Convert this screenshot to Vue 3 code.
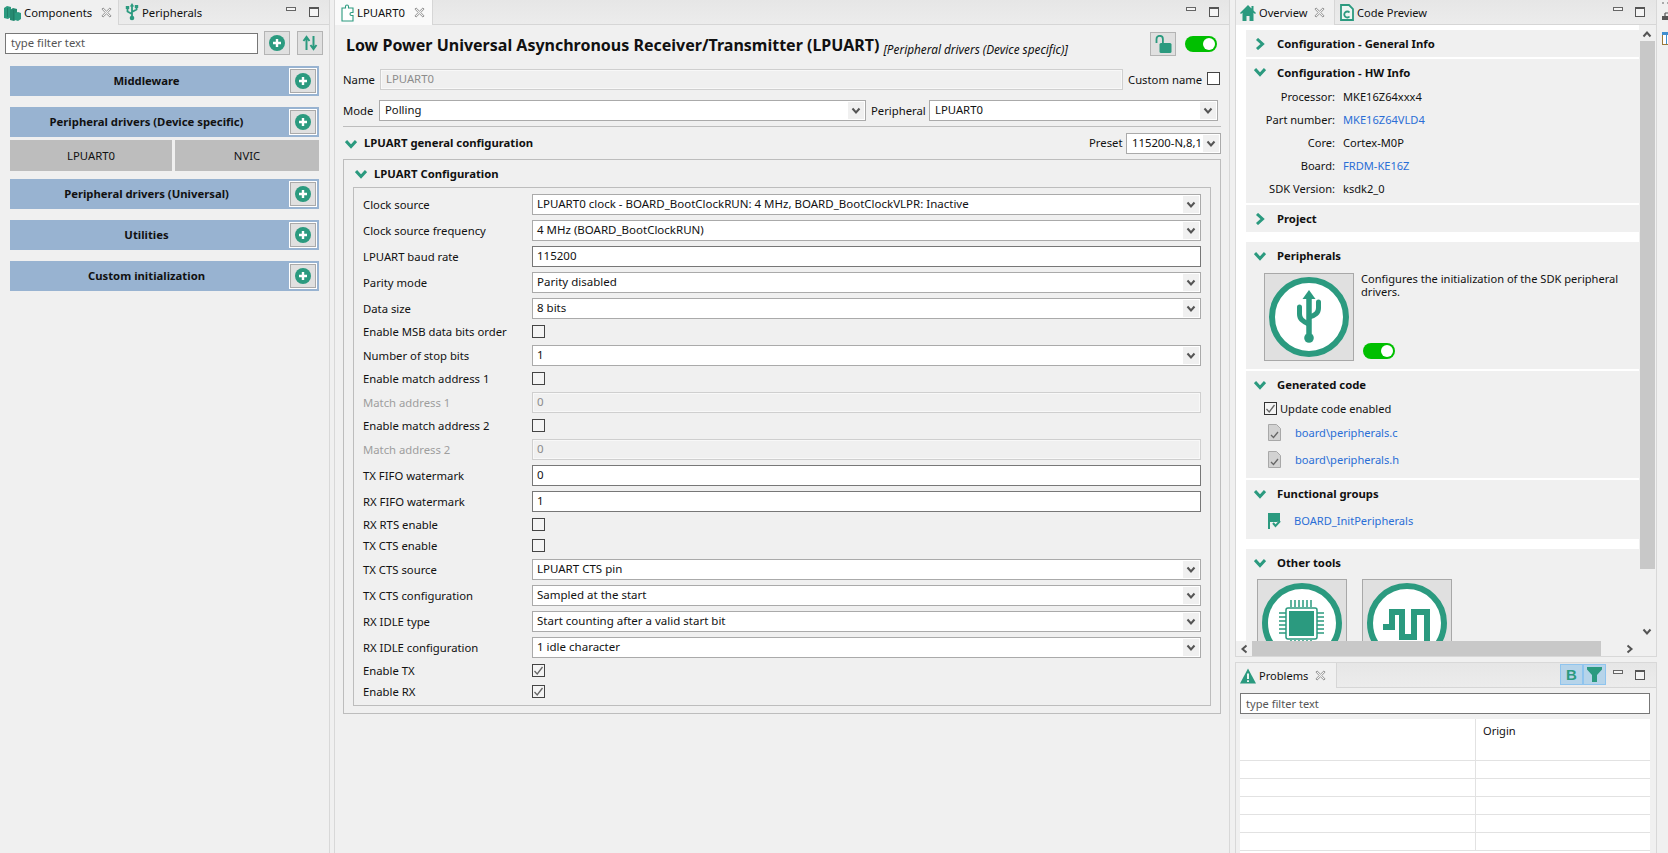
<script setup>
const bars = [
  { name: 'Middleware' },
  { name: 'Peripheral drivers (Device specific)', subs: ['LPUART0', 'NVIC'] },
  { name: 'Peripheral drivers (Universal)' },
  { name: 'Utilities' },
  { name: 'Custom initialization' },
]
const rows = [
  { l: 'Clock source', t: 'select', v: 'LPUART0 clock - BOARD_BootClockRUN: 4 MHz, BOARD_BootClockVLPR: Inactive' },
  { l: 'Clock source frequency', t: 'select', v: '4 MHz (BOARD_BootClockRUN)' },
  { l: 'LPUART baud rate', t: 'text', v: '115200' },
  { l: 'Parity mode', t: 'select', v: 'Parity disabled' },
  { l: 'Data size', t: 'select', v: '8 bits' },
  { l: 'Enable MSB data bits order', t: 'check' },
  { l: 'Number of stop bits', t: 'select', v: '1' },
  { l: 'Enable match address 1', t: 'check' },
  { l: 'Match address 1', t: 'off', v: '0' },
  { l: 'Enable match address 2', t: 'check' },
  { l: 'Match address 2', t: 'off', v: '0' },
  { l: 'TX FIFO watermark', t: 'text', v: '0' },
  { l: 'RX FIFO watermark', t: 'text', v: '1' },
  { l: 'RX RTS enable', t: 'check' },
  { l: 'TX CTS enable', t: 'check' },
  { l: 'TX CTS source', t: 'select', v: 'LPUART CTS pin' },
  { l: 'TX CTS configuration', t: 'select', v: 'Sampled at the start' },
  { l: 'RX IDLE type', t: 'select', v: 'Start counting after a valid start bit' },
  { l: 'RX IDLE configuration', t: 'select', v: '1 idle character' },
  { l: 'Enable TX', t: 'check', on: true },
  { l: 'Enable RX', t: 'check', on: true },
]
const hw = [
  { k: 'Processor:', v: 'MKE16Z64xxx4' },
  { k: 'Part number:', v: 'MKE16Z64VLD4', link: true },
  { k: 'Core:', v: 'Cortex-M0P' },
  { k: 'Board:', v: 'FRDM-KE16Z', link: true },
  { k: 'SDK Version:', v: 'ksdk2_0' },
]
const files = ['board\\peripherals.c', 'board\\peripherals.h']
const tableRows = [1, 2, 3, 4, 5]
</script>

<template>
  <div class="app">
    <svg class="sprite" width="0" height="0">
      <defs>
        <symbol id="close" viewBox="0 0 12 12">
          <path d="M1 2.2 2.2 1 6 4.6 9.8 1 11 2.2 7.4 6 11 9.8 9.8 11 6 7.4 2.2 11 1 9.8 4.6 6Z" fill="#f4f4f4" stroke="#8c8c8c" stroke-width="1" />
        </symbol>
        <symbol id="plus" viewBox="0 0 16 16">
          <circle cx="8" cy="8" r="8" fill="#2b9a7f" />
          <path d="M8 4v8M4 8h8" stroke="#fff" stroke-width="2.4" />
        </symbol>
        <symbol id="down" viewBox="0 0 10 8">
          <path d="M1.5 1.5 5 5.5l3.5-4" fill="none" stroke="#555" stroke-width="2" />
        </symbol>
        <symbol id="open" viewBox="0 0 12 12">
          <path d="M1 3 6 8.5 11 3" fill="none" stroke="#2b9a7f" stroke-width="3" />
        </symbol>
        <symbol id="shut" viewBox="0 0 12 12">
          <path d="M3 1 8.5 6 3 11" fill="none" stroke="#2b9a7f" stroke-width="3" />
        </symbol>
        <symbol id="tick" viewBox="0 0 13 13">
          <path d="M2.5 7 5.2 10 10.5 3" fill="none" stroke="#666" stroke-width="1.3" />
        </symbol>
      </defs>
    </svg>

    <!-- left -->
    <section class="pane left">
      <header class="tabs">
        <div class="tab on">
          <svg class="tabicon" width="17" height="16" viewBox="0 0 17 16">
            <path d="M0 3l3-2 4 1v10l-3 2-4-1z" fill="#2b9a7f" />
            <path d="M6 5l3-2 4 1v10l-3 2-4-1z" fill="#258a71" />
            <path d="M11 8l3-1 3 1v6l-3 2-3-1z" fill="#2b9a7f" />
            <path d="M3.500 3v9M9.500 5v10" stroke="#1f7a63" stroke-width=".8" />
          </svg>
          <span>Components</span>
          <svg class="x" width="11" height="11"><use href="#close" /></svg>
        </div>
        <div class="tab">
          <svg class="tabicon" width="14" height="18" viewBox="0 0 14 18">
            <path d="M7 3v11M2.500 5v3.500L7 11M11.500 4v2.500L7 9" fill="none" stroke="#2b9a7f" stroke-width="1.800" />
            <circle cx="7" cy="15" r="2.300" fill="#2b9a7f" />
            <path d="M7 0 4.800 3.500h4.400z" fill="#2b9a7f" />
            <path d="M.8 3h3.400v3H.8zM9.800 2h3.400v3H9.800z" fill="#2b9a7f" />
          </svg>
          <span>Peripherals</span>
        </div>
        <div class="winbtns"><i class="min"></i><i class="max"></i></div>
      </header>
      <div class="filter-row">
        <div class="filter">type filter text</div>
        <button class="tool">
          <svg width="16" height="16"><use href="#plus" /></svg>
        </button>
        <button class="tool sort">
          <svg width="16" height="16" viewBox="0 0 16 16">
            <path d="M4.500 15V3M1.500 6 4.500 2l3 4M11.500 1v12M8.500 10l3 4 3-4" fill="none" stroke="#2b9a7f" stroke-width="2" />
          </svg>
        </button>
      </div>
      <div class="groups">
        <div v-for="b in bars" :key="b.name" class="group">
          <div class="bar">
            <span class="bar-name">{{ b.name }}</span>
            <button class="bar-add">
              <svg width="16" height="16"><use href="#plus" /></svg>
            </button>
          </div>
          <div v-if="b.subs" class="subs">
            <div class="sub first">{{ b.subs[0] }}</div>
            <div class="sub">{{ b.subs[1] }}</div>
          </div>
        </div>
      </div>
    </section>

    <!-- center -->
    <section class="pane center">
      <header class="tabs">
        <div class="tab on white">
          <svg class="tabicon" width="13" height="18" viewBox="0 0 13 18">
            <path d="M1 4h3.500V2.500a1.500 1.500 0 0 1 3 0V4H12v4.500h-1.500a1.500 1.500 0 0 0 0 3H12V17H1z" fill="#fff" stroke="#2b9a7f" stroke-width="1.100" />
          </svg>
          <span>LPUART0</span>
          <svg class="x" width="11" height="11"><use href="#close" /></svg>
        </div>
        <div class="winbtns"><i class="min"></i><i class="max"></i></div>
      </header>
      <div class="body">
        <div class="title-row">
          <h1>Low Power Universal Asynchronous Receiver/Transmitter (LPUART)</h1>
          <em>[Peripheral drivers (Device specific)]</em>
          <button class="lock">
            <svg width="17" height="19" viewBox="0 0 17 19">
              <path d="M1.500 8V4a3.200 3.200 0 0 1 6.400 0v4" fill="none" stroke="#2b9a7f" stroke-width="1.800" />
              <rect x="4.500" y="8" width="12" height="10" rx="1.500" fill="#2b9a7f" />
            </svg>
          </button>
          <div class="toggle"><i></i></div>
        </div>
        <div class="name-row">
          <label class="lab-name">Name</label>
          <div class="field off name-field">LPUART0</div>
          <label class="lab-custom">Custom name</label>
          <i class="cb"></i>
        </div>
        <div class="mode-row">
          <label class="lab-mode">Mode</label>
          <div class="field select mode-field">Polling<span class="arrow"><svg width="10" height="8"><use href="#down" /></svg></span></div>
          <label class="lab-peri">Peripheral</label>
          <div class="field select peri-field">LPUART0<span class="arrow"><svg width="10" height="8"><use href="#down" /></svg></span></div>
        </div>
        <div class="rule"></div>
        <div class="general-row">
          <svg class="chev" width="12" height="12"><use href="#open" /></svg>
          <strong>LPUART general configuration</strong>
          <label class="lab-preset">Preset</label>
          <div class="field select preset-field">115200-N,8,1<span class="arrow"><svg width="10" height="8"><use href="#down" /></svg></span></div>
        </div>
        <div class="outer">
          <div class="outer-head">
            <svg class="chev" width="12" height="12"><use href="#open" /></svg>
            <strong>LPUART Configuration</strong>
          </div>
          <div class="inner">
            <div v-for="r in rows" :key="r.l" class="row" :class="r.t === 'check' ? 'row-check' : 'row-field'">
              <label :class="{ dis: r.t === 'off' }">{{ r.l }}</label>
              <div v-if="r.t === 'select'" class="field select">{{ r.v }}<span class="arrow"><svg width="10" height="8"><use href="#down" /></svg></span></div>
              <div v-else-if="r.t === 'text'" class="field text">{{ r.v }}</div>
              <div v-else-if="r.t === 'off'" class="field off">{{ r.v }}</div>
              <i v-else class="cb">
                <svg v-if="r.on" width="13" height="13"><use href="#tick" /></svg>
              </i>
            </div>
          </div>
        </div>
      </div>
    </section>

    <!-- right -->
    <div class="rightcol">
      <section class="pane overview">
        <header class="tabs">
          <div class="tab on ov">
            <svg class="tabicon" width="16" height="16" viewBox="0 0 16 16">
              <path d="M8 0 0 8l1 1 1.500-1.300V16h4v-5h3v5h4V7.700L15 9l1-1-2.500-2.500V1h-2v2.500z" fill="#2b9a7f" />
            </svg>
            <span>Overview</span>
            <svg class="x" width="11" height="11"><use href="#close" /></svg>
          </div>
          <div class="tab">
            <svg class="tabicon" width="14" height="17" viewBox="0 0 14 17">
              <path d="M1 1h8l4 4v11H1z" fill="#eef6f3" stroke="#2b9a7f" stroke-width="1.800" />
              <path d="M9.500 8.500a3 3 0 1 0 0 4" fill="none" stroke="#2b9a7f" stroke-width="1.800" />
            </svg>
            <span>Code Preview</span>
          </div>
          <div class="winbtns"><i class="min"></i><i class="max"></i></div>
        </header>
        <div class="ov-main">
          <div class="ov-scroll">
            <div class="sec s-closed">
              <div class="sec-head"><svg width="12" height="12"><use href="#shut" /></svg><strong>Configuration - General Info</strong></div>
            </div>
            <div class="sec s-hw">
              <div class="sec-head"><svg width="12" height="12"><use href="#open" /></svg><strong>Configuration - HW Info</strong></div>
              <div v-for="h in hw" :key="h.k" class="kv">
                <span class="k">{{ h.k }}</span><span :class="{ link: h.link }">{{ h.v }}</span>
              </div>
            </div>
            <div class="sec s-closed">
              <div class="sec-head"><svg width="12" height="12"><use href="#shut" /></svg><strong>Project</strong></div>
            </div>
            <div class="sec s-peri far">
              <div class="sec-head"><svg width="12" height="12"><use href="#open" /></svg><strong>Peripherals</strong></div>
              <div class="peri-body">
                <div class="bigbtn">
                  <svg width="88" height="86" viewBox="0 0 88 86">
                    <circle cx="44" cy="43" r="37" fill="#fff" stroke="#2b9a7f" stroke-width="6" />
                    <path d="M44 22v38" stroke="#2b9a7f" stroke-width="5.500" />
                    <path d="M44 16l-6.500 9h13z" fill="#2b9a7f" />
                    <circle cx="44" cy="64" r="4.800" fill="#2b9a7f" />
                    <path d="M34.500 33v7c0 5 3 7 9 10M53.500 28v6c0 5-3 7-9 9" fill="none" stroke="#2b9a7f" stroke-width="5" stroke-linecap="round" />
                  </svg>
                </div>
                <div class="peri-text">
                  <p>Configures the initialization of the SDK peripheral drivers.</p>
                  <div class="toggle"><i></i></div>
                </div>
              </div>
            </div>
            <div class="sec s-gen">
              <div class="sec-head"><svg width="12" height="12"><use href="#open" /></svg><strong>Generated code</strong></div>
              <div class="upd"><i class="cb dark"><svg width="13" height="13"><use href="#tick" /></svg></i><span>Update code enabled</span></div>
              <div v-for="f in files" :key="f" class="file">
                <svg width="13" height="17" viewBox="0 0 13 17">
                  <path d="M.500.500h8l4 4v12H.500z" fill="#d2d2d2" stroke="#a8a8a8" />
                  <path d="M3 11l2.500 2.500L10 8" fill="none" stroke="#666" stroke-width="1.300" />
                </svg>
                <span class="link">{{ f }}</span>
              </div>
            </div>
            <div class="sec s-func">
              <div class="sec-head"><svg width="12" height="12"><use href="#open" /></svg><strong>Functional groups</strong></div>
              <div class="file fn">
                <svg width="14" height="16" viewBox="0 0 14 16">
                  <path d="M1 0h12v8l-3 1H3v7H1z" fill="#2b9a7f" />
                  <path d="M6 10l2.500 3L13 8" fill="none" stroke="#2b9a7f" stroke-width="2" />
                </svg>
                <span class="link">BOARD_InitPeripherals</span>
              </div>
            </div>
            <div class="sec s-other far">
              <div class="sec-head"><svg width="12" height="12"><use href="#open" /></svg><strong>Other tools</strong></div>
              <div class="tools">
                <div class="bigbtn">
                  <svg width="88" height="86" viewBox="0 0 88 86">
                    <circle cx="44" cy="43" r="37" fill="#fff" stroke="#2b9a7f" stroke-width="6" />
                    <rect x="28" y="28" width="31" height="31" rx="2" fill="none" stroke="#2b9a7f" stroke-width="1.500" />
                    <rect x="31" y="31" width="25" height="25" fill="#2b9a7f" />
                    <path d="M33 20v7M37 20v7M41 20v7M45 20v7M49 20v7M53 20v7M21 33h7M21 37h7M21 41h7M21 45h7M21 49h7M21 53h7M59 33h7M59 37h7M59 41h7M59 45h7M59 49h7M59 53h7M33 60v7M37 60v7M41 60v7M45 60v7M49 60v7M53 60v7" stroke="#2b9a7f" stroke-width="1.500" />
                  </svg>
                </div>
                <div class="bigbtn">
                  <svg width="88" height="86" viewBox="0 0 88 86">
                    <circle cx="44" cy="43" r="37" fill="#fff" stroke="#2b9a7f" stroke-width="6" />
                    <path d="M20 47h9V32h10v25h12V32h13v30" fill="none" stroke="#2b9a7f" stroke-width="6" />
                  </svg>
                </div>
              </div>
            </div>
          </div>
          <div class="vscroll">
            <svg width="10" height="8" class="flip"><use href="#down" /></svg>
            <div class="vthumb"></div>
            <svg width="10" height="8"><use href="#down" /></svg>
          </div>
        </div>
        <div class="hscroll">
          <svg width="10" height="8" class="lft"><use href="#down" /></svg>
          <div class="hthumb"></div>
          <svg width="10" height="8" class="rgt"><use href="#down" /></svg>
        </div>
      </section>

      <section class="pane problems">
        <header class="tabs">
          <div class="tab on pr">
            <svg class="tabicon" width="16" height="16" viewBox="0 0 16 16">
              <path d="M8 .500 0 15.500h16z" fill="#2b9a7f" />
              <path d="M8 5.500v5.500M8 12.300v1.700" stroke="#fff" stroke-width="1.800" />
            </svg>
            <span>Problems</span>
            <svg class="x" width="11" height="11"><use href="#close" /></svg>
          </div>
          <div class="pr-btns">
            <span class="pr-b"><b>B</b></span>
            <span class="pr-b">
              <svg width="15" height="15" viewBox="0 0 15 15"><path d="M0 0h15v2.500L10 8v7H5V8L0 2.500z" fill="#2b9a7f" /></svg>
            </span>
          </div>
          <div class="winbtns"><i class="min"></i><i class="max"></i></div>
        </header>
        <div class="filter wide">type filter text</div>
        <div class="table">
          <div class="tr head"><div class="td c1"></div><div class="td c2">Origin</div></div>
          <div v-for="t in tableRows" :key="t" class="tr"><div class="td c1"></div><div class="td c2"></div></div>
        </div>
      </section>
    </div>

    <!-- right trim -->
    <aside class="strip">
      <div class="dots"></div>
      <svg width="7" height="8" viewBox="0 0 7 8"><path d="M3 1h4M3 1v3M0 4.500h7V8H0z" fill="#555" stroke="#555" stroke-width="1.200" /></svg>
      <svg class="strip-blue" width="7" height="13" viewBox="0 0 7 13"><rect x=".5" y=".5" width="12" height="12" fill="#fff" stroke="#9a7a3a" /><path d="M0 0h7v3H0z" fill="#3f8fd0" /><path d="M4.500 3v9" stroke="#3f8fd0" /></svg>
    </aside>
  </div>
</template>

<style>
html, body { margin: 0; background: #f0f0f0; }
</style>

<style scoped>
.app {
  width: 1668px; height: 853px; overflow: hidden; display: flex; background: #f0f0f0;
  font-family: "Noto Sans", "Open Sans", sans-serif; font-size: 11.3px; color: #111;
}
.app * { box-sizing: border-box; }
.sprite { position: absolute; }
button { padding: 0; margin: 0; font: inherit; }
label { white-space: nowrap; }
i { font-style: normal; display: block; }
.pane { background: #f0f0f0; display: flex; flex-direction: column; overflow: hidden; }
.left { width: 330px; border-right: 1px solid #d8d8d8; flex: none; }
.center { width: 896px; margin-left: 4px; border-left: 1px solid #d8d8d8; border-right: 1px solid #d8d8d8; flex: none; }
.rightcol { width: 422px; margin-left: 5px; display: flex; flex-direction: column; gap: 5px; flex: none; }
.strip { width: 11px; margin-left: 1px; padding: 2px 0 0 4px; display: flex; flex-direction: column; gap: 8px; flex: none; overflow: hidden; background: #f0f0f0; }
.dots { width: 7px; height: 2px; border-top: 2px dotted #aaa; }
.strip-blue { margin-top: 4px; }

.tabs { height: 25px; flex: none; display: flex; align-items: stretch; background: linear-gradient(#e6e6e6, #ececec); border-bottom: 1px solid #d6d6d6; }
.tab { display: flex; align-items: center; height: 24px; padding-left: 5px; white-space: nowrap; }
.tab.on { background: #f0f0f0; border-right: 1px solid #d6d6d6; height: 25px; }
.tab.on.white { background: #fafafa; }
.tabicon { flex: none; margin-right: 3px; }
.x { margin-left: 9px; margin-right: 8px; flex: none; }
.left .tab.on { width: 119px; padding-left: 4px; }
.left .tab:nth-child(2) { padding-left: 6px; }
.center .tab.on { width: 98px; padding-left: 6px; }
.tab.ov { width: 99px; padding-left: 4px; }
.tab.ov .x, .tab.pr .x { margin-left: 7px; }
.overview .tab:nth-child(2) { padding-left: 5px; }
.tab.pr { width: 101px; padding-left: 4px; }
.winbtns { margin-left: auto; display: flex; align-items: flex-start; gap: 13px; padding: 7px 10px 0 0; }
.overview .winbtns { gap: 12px; padding-right: 11px; }
.min { width: 10px; height: 4px; border: 1px solid #666; background: #f4f4f4; }
.max { width: 10px; height: 10px; border: 1px solid #555; border-top-width: 2px; margin-top: 0; background: #f4f4f4; }

.filter-row { display: flex; align-items: center; padding: 6px 0 0 5px; }
.filter { height: 21px; line-height: 17px; width: 253px; padding-left: 5px; border: 1px solid #777; background: #fff; color: #555; }
.tool { width: 26px; height: 24px; margin-left: 6px; border: 1px solid #b4b4b4; background: #e0e0e0; display: flex; align-items: center; justify-content: center; }
.tool.sort { margin-left: 7px; }
.groups { padding: 11px 0 0 10px; width: 319px; display: flex; flex-direction: column; gap: 11px; }
.bar { height: 30px; background: #98b3d1; display: flex; align-items: center; }
.bar-name { flex: 1; text-align: center; font-weight: 700; padding-left: 4px; padding-right: 10px; margin-top: -2px; }
.bar-add { width: 28px; height: 26px; margin-right: 2px; border: 1px solid #fff; outline: 1px solid #aaa; outline-offset: -2px; background: #e0e0e0; display: flex; align-items: center; justify-content: center; }
.subs { display: flex; gap: 3px; margin-top: 3px; margin-bottom: -3px; }
.sub { height: 31px; line-height: 31px; background: #bdbdbd; text-align: center; width: 144px; }
.sub.first { width: 162px; }

.body { padding: 0 8px 0 8px; }
.title-row { height: 24px; margin-top: 7px; display: flex; align-items: center; padding-left: 3px; }
.title-row h1 { margin: 2px 0 0; font-size: 16px; font-weight: 700; white-space: nowrap; }
.title-row em { font-size: 11.8px; margin-left: 4px; margin-top: 10px; white-space: nowrap; }
.lock { width: 26px; height: 24px; margin-left: auto; border: 1px solid #b4b4b4; background: #e0e0e0; display: flex; align-items: center; justify-content: center; }
.toggle { width: 32px; height: 16px; border-radius: 8px; background: #00bf00; margin-left: 9px; margin-right: 4px; padding: 2px; display: flex; justify-content: flex-end; }
.toggle i { width: 12px; height: 12px; border-radius: 50%; background: #fff; }
.name-row { height: 21px; margin-top: 13px; display: flex; align-items: center; }
.lab-name { width: 37px; flex: none; }
.name-field { width: 743px; flex: none; }
.lab-custom { margin-left: 5px; width: 79px; flex: none; }
.name-row .cb { margin-top: -2px; }
.mode-row { height: 21px; margin-top: 10px; display: flex; align-items: center; padding-right: 3px; }
.lab-mode { width: 36px; flex: none; }
.mode-field { width: 487px; flex: none; }
.lab-peri { margin-left: 5px; width: 58px; flex: none; }
.peri-field { flex: 1; }
.rule { height: 1px; margin-top: 5px; background: #bdbdbd; }
.general-row { height: 21px; margin-top: 6px; display: flex; align-items: center; padding-left: 2px; }
.general-row strong { margin: -2px 0 0 7px; }
.lab-preset { margin-left: auto; margin-top: -2px; width: 37px; flex: none; }
.preset-field { width: 95px; flex: none; }
.outer { margin-top: 5px; border: 1px solid #bdbdbd; height: 555px; padding: 0 9px; }
.outer-head { height: 27px; display: flex; align-items: center; padding-left: 2px; }
.outer-head strong { margin-left: 7px; }
.inner { border: 1px solid #bdbdbd; padding: 6px 9px 5px; }
.row { display: grid; grid-template-columns: 169px 1fr; align-items: center; margin-bottom: 5px; }
.row:last-child { margin-bottom: 0; }
.row-field { height: 21px; }
.row-field .field { font-size: 11.5px; padding-left: 4px; }
.row-check { height: 16px; align-items: start; }
.row-check label { line-height: 16px; }
.row-check .cb { justify-self: start; margin-top: 1px; }
.dis { color: #9e9e9e; }

.field { height: 21px; line-height: 18px; padding-left: 5px; white-space: nowrap; position: relative; background: #fff; border: 1px solid #aaa; overflow: hidden; }
.field.text { border-color: #777; }
.field.off { background: #f0f0f0; border: 1px solid #cfcfcf; box-shadow: inset 0 0 0 1px #f8f8f8; color: #8c8c8c; }
.arrow { position: absolute; right: 1px; top: 1px; bottom: 1px; width: 16px; background: #f0f0f0; display: flex; align-items: center; justify-content: center; }
.cb { width: 13px; height: 13px; border: 1px solid #444; background: #f4f4f4; flex: none; display: block; position: relative; }
.cb svg { position: absolute; left: -1px; top: -1px; }
.name-row .cb { background: #fff; }

.overview { height: 657px; border: 1px solid #d8d8d8; border-top: 0; flex: none; font-size: 11.1px; }
.ov-main { height: 616px; flex: none; display: flex; }
.ov-scroll { width: 403px; height: 616px; overflow: hidden; background: #fff; padding: 5px 0 0 10px; flex: none; }
.sec { background: #f0f0f0; margin-bottom: 2px; overflow: hidden; }
.sec.far { margin-top: 10px; }
.sec-head { height: 27px; display: flex; align-items: center; padding-left: 8px; }
.sec-head strong { margin-left: 11px; font-size: 11.3px; }
.s-hw { height: 144px; }
.s-hw .sec-head { height: 26px; }
.kv { height: 23px; display: flex; align-items: center; }
.k { width: 89px; text-align: right; margin-right: 8px; }
.link { color: #2a6ed6; }
.s-peri { height: 127px; }
.peri-body { display: flex; padding: 4px 0 0 18px; }
.bigbtn { width: 90px; height: 88px; border: 1px solid #a8a8a8; background: #e0e0e0; flex: none; }
.peri-text { margin-left: 7px; margin-top: -1px; }
.peri-text p { margin: 0; width: 272px; line-height: 13px; }
.peri-text .toggle { margin: 45px 0 0 2px; }
.s-gen { height: 107px; }
.upd { display: flex; align-items: center; gap: 3px; padding: 0 0 0 18px; height: 20px; }
.cb.dark { border-color: #333; }
.file { display: flex; align-items: center; padding-left: 22px; height: 27px; margin-top: 0; }
.file svg { margin-right: 14px; flex: none; }
.upd + .file { margin-top: 1px; }
.s-func { height: 59px; }
.fn { padding-left: 21px; height: 25px; margin-top: 1px; }
.fn svg { margin-right: 13px; }
.s-other { height: 92px; margin-bottom: 0; }
.tools { display: flex; gap: 15px; padding: 3px 0 0 11px; }
.vscroll { width: 16px; flex: none; background: #f0f0f0; display: flex; flex-direction: column; align-items: center; justify-content: flex-start; }
.flip { transform: rotate(180deg); margin-top: 5px; flex: none; }
.vthumb { width: 15px; height: 528px; background: #c8c8c8; margin-top: 3px; margin-bottom: 59px; flex: none; }
.hscroll { height: 15px; flex: none; display: flex; align-items: center; background: #f0f0f0; padding-left: 3px; }
.lft { transform: rotate(90deg); flex: none; }
.rgt { transform: rotate(-90deg); margin-left: 24px; flex: none; }
.hthumb { width: 349px; height: 15px; margin-left: 3px; background: #c8c8c8; flex: none; }

.problems { flex: 1; border: 1px solid #d8d8d8; border-bottom: 0; font-size: 11.1px; }
.pr-btns { display: flex; margin-left: auto; margin-right: -3px; }
.pr-b { width: 23px; height: 21px; margin-top: 1px; background: #b6d4ea; border: 1px solid #8fc4ee; display: flex; align-items: center; justify-content: center; }
.pr-b b { font-family: "Liberation Sans", sans-serif; color: #2b9a7f; font-size: 15px; font-weight: 700; }
.problems .winbtns { margin-left: 10px; gap: 12px; padding-right: 11px; }
.filter.wide { width: 410px; margin: 5px 0 0 4px; flex: none; line-height: 19px; }
.table { margin: 5px 0 0 4px; width: 410px; background: #fff; flex: 1; }
.tr { display: flex; height: 18px; border-bottom: 1px solid #e2e2e2; }
.tr.head { height: 42px; }
.td.c1 { width: 236px; border-right: 1px solid #e2e2e2; }
.td.c2 { flex: 1; padding: 4px 0 0 7px; }
</style>
